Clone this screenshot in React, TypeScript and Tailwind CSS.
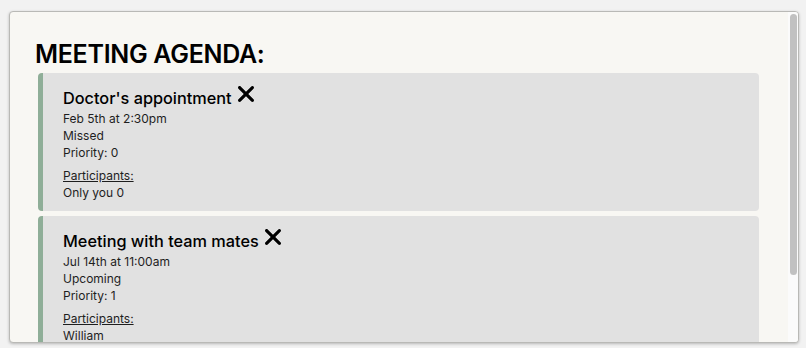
import React from 'react';

type Meeting = {
  title: string;
  when: string;
  status: string;
  priority: number;
  participants: string[];
};

const meetings: Meeting[] = [
  { title: "Doctor's appointment", when: 'Feb 5th at 2:30pm', status: 'Missed', priority: 0, participants: ['Only you 0'] },
  { title: 'Meeting with team mates', when: 'Jul 14th at 11:00am', status: 'Upcoming', priority: 1, participants: ['William'] },
];

function CloseIcon() {
  return (
    <svg viewBox="32 96 320 320" className="inline-block w-[16px] h-[16px] ml-[6px] align-top" fill="currentColor">
      <path d="M342.6 150.6c12.5-12.5 12.5-32.8 0-45.3s-32.8-12.5-45.3 0L192 210.7 86.6 105.4c-12.5-12.5-32.8-12.5-45.3 0s-12.5 32.8 0 45.3L146.7 256 41.4 361.4c-12.5 12.5-12.5 32.8 0 45.3s32.8 12.5 45.3 0L192 301.3 297.4 406.6c12.5 12.5 32.8 12.5 45.3 0s12.5-32.8 0-45.3L237.3 256 342.6 150.6z" />
    </svg>
  );
}

function MeetingCard({ meeting }: { meeting: Meeting }) {
  return (
    <div className="bg-[#e1e1e1] border-l-[5px] border-[#8fae98] rounded-[4px] pl-[20px] pr-4 pt-[13px] pb-[10px] text-[#1e1e1e]">
      <h2 className="text-[16.3px] leading-[24px] font-medium text-black">
        {meeting.title}
        <CloseIcon />
      </h2>
      <p className="text-[12px] leading-[17px]">{meeting.when}</p>
      <p className="text-[12px] leading-[17px]">{meeting.status}</p>
      <p className="text-[12px] leading-[17px]">Priority: {meeting.priority}</p>
      <p className="text-[12px] leading-[17px] underline mt-[6px]">Participants:</p>
      {meeting.participants.map((p) => (
        <p key={p} className="text-[12px] leading-[17px]">{p}</p>
      ))}
    </div>
  );
}

export default function App() {
  return (
    <div
      className="w-[806px] h-[348px] bg-[#f2f2f2] pt-[11px] pl-[9px] overflow-hidden"
      style={{ fontFamily: 'Inter, "Noto Sans", sans-serif' }}
    >
      <div className="relative w-[790px] h-[332px] bg-[#f8f7f3] border border-[#b9b9b6] rounded-[4px] shadow-[0_1px_3px_rgba(0,0,0,0.25)] overflow-hidden">
        <div className="h-full overflow-hidden pl-[28px] pr-[39px] pt-[24px]">
          <h1 className="text-[25px] leading-[37px] font-semibold text-black -ml-[3px] tracking-[-0.3px]">MEETING AGENDA:</h1>
          <div className="flex flex-col gap-[5px]">
            {meetings.map((m) => (
              <MeetingCard key={m.title} meeting={m} />
            ))}
          </div>
        </div>
        <div className="absolute top-0 right-0 bottom-0 w-[10px] bg-[#fbfbfb]">
          <div className="absolute top-[2px] right-[1px] w-[7px] h-[261px] rounded-full bg-[#c1c1c1]" />
        </div>
      </div>
    </div>
  );
}
